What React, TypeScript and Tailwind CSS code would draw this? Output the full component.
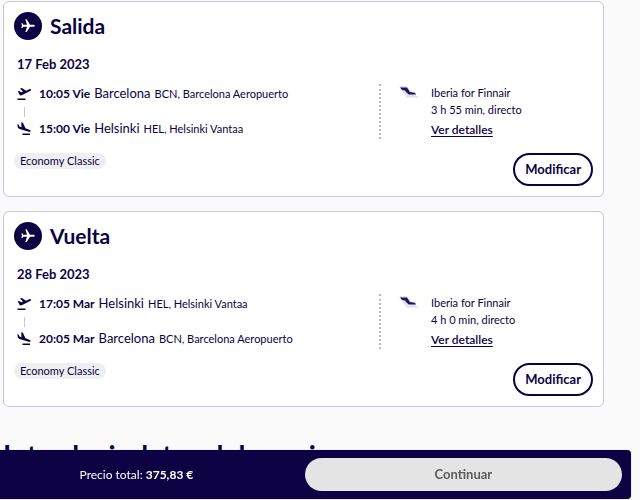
type Stop = { time: string; city: string; airport: string }
type Flight = {
  title: string
  date: string
  from: Stop
  to: Stop
  carrier: string
  duration: string
  fare: string
}

const FLIGHTS: Flight[] = [
  {
    title: 'Salida',
    date: '17 Feb 2023',
    from: { time: '10:05 Vie', city: 'Barcelona', airport: 'BCN, Barcelona Aeropuerto' },
    to: { time: '15:00 Vie', city: 'Helsinki', airport: 'HEL, Helsinki Vantaa' },
    carrier: 'Iberia for Finnair',
    duration: '3 h 55 min, directo',
    fare: 'Economy Classic',
  },
  {
    title: 'Vuelta',
    date: '28 Feb 2023',
    from: { time: '17:05 Mar', city: 'Helsinki', airport: 'HEL, Helsinki Vantaa' },
    to: { time: '20:05 Mar', city: 'Barcelona', airport: 'BCN, Barcelona Aeropuerto' },
    carrier: 'Iberia for Finnair',
    duration: '4 h 0 min, directo',
    fare: 'Economy Classic',
  },
]

function PlaneBadge() {
  return (
    <span className="flex size-7 shrink-0 items-center justify-center rounded-full bg-[#0c0243]">
      <svg viewBox="0 0 24 24" className="size-4 rotate-90 fill-white" aria-hidden="true">
        <path d="M21 16v-2l-8-5V3.5C13 2.67 12.33 2 11.5 2S10 2.67 10 3.5V9l-8 5v2l8-2.5V19l-2 1.5V22l3.5-1 3.5 1v-1.5L13 19v-5.500z" />
      </svg>
    </span>
  )
}

function TakeoffIcon() {
  return (
    <svg viewBox="0 0 14 14" className="h-[14px] w-[14px] shrink-0 fill-[#0c0243]" aria-hidden="true">
      <path d="M0.800 4.200l1.500-.3 1.700 1.300 2-.6L3 1.500l1.800-.5 4.300 2.700 3.200-1.400c.9-.4 1.500-.2 1.700.3.200.6-.2 1-.9 1.400L5.200 8.100c-.9.4-1.900.4-2.600 0z" />
      <path d="M0.500 11.500H8.500v1.500H0.500z" />
    </svg>
  )
}

function LandingIcon() {
  return (
    <svg viewBox="0 0 14 14" className="h-[14px] w-[14px] shrink-0 fill-[#0c0243]" aria-hidden="true">
      <path d="M0.300 2.200l1.300.4.9 1.900 2 .7L4.200.300l1.700.5 2.600 5.500 3.800 1.400c1 .4 1.500 1 1.300 1.600-.2.600-.9.700-1.800.4L2.600 6.900C1.500 6.500.800 5.700.700 4.700z" />
      <path d="M5.500 11.500H13v1.500H5.500z" />
    </svg>
  )
}

function TailLogo() {
  return (
    <svg viewBox="0 0 20 12" className="mt-[2px] h-3 w-5 shrink-0" aria-hidden="true">
      <path d="M0 0h8l5 6.500 7 5H7.500z" fill="#e2e2ec" />
      <path d="M1 1.500h7l2 3 .8 1.500 5.200.8 1 1.700H9.800L7 6l-1-1.500-3-.5z" fill="#1c1663" />
    </svg>
  )
}

function StopRow({ stop, icon }: { stop: Stop; icon: React.ReactNode }) {
  return (
    <li className="flex h-5 items-center">
      {icon}
      <span className="ml-2 text-xs font-bold">{stop.time}</span>
      <span className="ml-1 text-[13px]">{stop.city}</span>
      <span className="ml-1 text-[11px]">{stop.airport}</span>
    </li>
  )
}

function FlightCard({ flight }: { flight: Flight }) {
  return (
    <article className="rounded-md border border-[#c9c7da] bg-white p-[10px]">
      <header className="flex h-7 items-center gap-2">
        <PlaneBadge />
        <h2 className="text-[21px] leading-7 font-bold">{flight.title}</h2>
      </header>
      <h3 className="mt-4 px-[3px] text-[13px] leading-4 font-bold">{flight.date}</h3>

      <div className="mt-3 flex">
        <ul className="flex-1 px-[3px]">
          <StopRow stop={flight.from} icon={<TakeoffIcon />} />
          <li className="flex h-[15px] items-center pl-[7px]" aria-hidden="true">
            <span className="h-[10px] w-px bg-[#c9c7da]" />
          </li>
          <StopRow stop={flight.to} icon={<LandingIcon />} />
        </ul>
        <div className="flex w-[214px] border-l-2 border-dotted border-[#b6b3cc] pl-[18px]">
          <TailLogo />
          <div className="ml-3 text-[11px] leading-[17px]">
            <p>{flight.carrier}</p>
            <p>{flight.duration}</p>
            <a href="#detalles" className="mt-[3px] block text-xs leading-[17px] font-semibold underline underline-offset-2">
              Ver detalles
            </a>
          </div>
        </div>
      </div>

      <footer className="mt-[14px] flex items-start justify-between">
        <span className="rounded-full bg-[#efeff1] px-[6px] text-[11px] leading-4">{flight.fare}</span>
        <button
          type="button"
          className="h-[33px] rounded-full border-2 border-[#0c0243] px-[10px] text-[13px] font-bold"
        >
          Modificar
        </button>
      </footer>
    </article>
  )
}

export default function App() {
  return (
    <div className="min-h-screen bg-[#fafafa] font-['Lato',sans-serif] text-[#0c0243]">
      <main className="pt-px pr-9 pl-[3px]">
        <div className="flex flex-col gap-[14px]">
          {FLIGHTS.map((flight) => (
            <FlightCard key={flight.title} flight={flight} />
          ))}
        </div>
        <h2 className="mt-8 text-[28px] leading-8 font-bold">Introducir datos del pasajero</h2>
      </main>

      {/* Sticky checkout bar */}
      <div className="fixed right-[9px] bottom-px left-0 flex h-[49px] items-center rounded-r-sm bg-[#0c0243] pr-[9px] shadow-[0_0_1px_#8a86a8]">
        <p className="flex-1 pr-8 text-center text-xs text-white">
          Precio total: <strong className="font-bold">375,83 €</strong>
        </p>
        <button
          type="button"
          disabled
          className="h-[33px] w-[51%] rounded-full bg-[#e4e4e4] text-[13px] font-bold text-[#5c5c5c]"
        >
          Continuar
        </button>
      </div>
    </div>
  )
}
